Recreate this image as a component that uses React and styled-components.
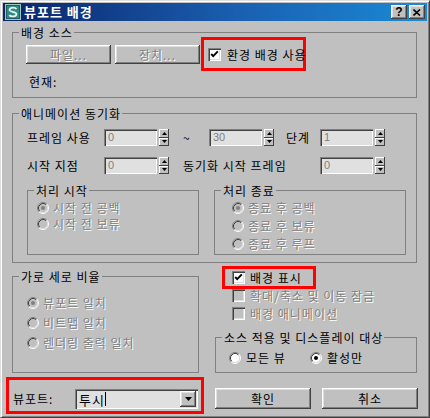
import React from "react";
import styled, { createGlobalStyle } from "styled-components";

const GlobalStyle = createGlobalStyle`
  html, body {
    margin: 0;
    padding: 0;
    background: #c0c0c0;
  }
  body {
    font-family: "Noto Sans CJK KR", "Noto Sans", sans-serif;
    font-size: 12px;
    letter-spacing: 1px;
    color: #000;
  }
`;

const raised = `
  box-shadow: inset -1px -1px #404040, inset 1px 1px #fff,
    inset -2px -2px #808080, inset 2px 2px #dfdfdf;
`;

const sunken = `
  box-shadow: inset 1px 1px #808080, inset 2px 2px #404040,
    inset -1px -1px #fff, inset -2px -2px #dfdfdf;
`;

const Window = styled.div`
  width: 430px;
  height: 418px;
  box-sizing: border-box;
  border: 1px solid;
  border-color: #dfdfdf #404040 #404040 #dfdfdf;
  box-shadow: inset 1px 1px #fff, inset -1px -1px #808080;
  padding: 2px;
  background: #c0c0c0;
  overflow: hidden;
  display: flex;
  flex-direction: column;
`;

const TitleBar = styled.div`
  height: 18px;
  flex: none;
  display: flex;
  align-items: center;
  padding: 0 2px 0 2px;
  background: linear-gradient(90deg, #0a246a 0%, #1a5fb0 55%, #1a8ad6 100%);
  color: #fff;
  font-weight: bold;
  font-size: 13px;
  line-height: 18px;
`;

const TitleText = styled.span`
  flex: 1;
  margin-left: 3px;
  white-space: nowrap;
`;

const CaptionButton = styled.div`
  width: 16px;
  height: 14px;
  box-sizing: border-box;
  background: #c0c0c0;
  ${raised};
  margin-left: ${(p) => p.$gap || 0}px;
  display: flex;
  align-items: center;
  justify-content: center;
  color: #000;
  font-family: "Liberation Sans", Arial, sans-serif;
  font-size: 12px;
  font-weight: bold;
  letter-spacing: 0;
  line-height: 14px;
`;

const Body = styled.div`
  padding-left: 9px;
  display: flex;
  flex-direction: column;
`;

const Group = styled.div`
  box-sizing: border-box;
  border: 1px solid #808080;
  width: ${(p) => p.$w}px;
  height: ${(p) => p.$h}px;
  margin-top: ${(p) => p.$mt || 0}px;
  padding: ${(p) => p.$pad || "0"};
  flex: none;
`;

const GroupTitle = styled.div`
  width: fit-content;
  height: 13px;
  line-height: 13px;
  margin: -7px 0 -6px 6px;
  padding: 0 1px 0 2px;
  background: #c0c0c0;
  white-space: nowrap;
`;

const Text = styled.span`
  white-space: nowrap;
  line-height: 13px;
  color: ${(p) => (p.$disabled ? "#808080" : "#000")};
  text-shadow: ${(p) => (p.$disabled ? "1px 1px 0 #fff" : "none")};
`;

const SourceRow = styled.div`
  display: flex;
  align-items: center;
  height: 34px;
  margin-top: 4px;
  padding-left: 13px;
`;

const PushButton = styled.div`
  width: ${(p) => p.$w}px;
  height: ${(p) => p.$h || 21}px;
  box-sizing: border-box;
  margin-left: ${(p) => p.$ml || 0}px;
  margin-top: ${(p) => p.$mt || 0}px;
  background: #c0c0c0;
  ${raised};
  display: flex;
  align-items: center;
  justify-content: center;
  flex: none;
`;

const Highlight = styled.div`
  box-sizing: border-box;
  border: 3px solid #ff0000;
  width: ${(p) => p.$w}px;
  height: ${(p) => p.$h}px;
  margin-left: ${(p) => p.$ml || 0}px;
  padding: ${(p) => p.$pad || "0"};
  display: flex;
  align-items: center;
  flex: none;
`;

const Current = styled.div`
  margin-top: 4px;
  padding-left: 16px;
  height: 13px;
  line-height: 13px;
`;

const SyncGrid = styled.div`
  display: grid;
  grid-template-columns: 77px 79px 26px 77px 34px 66px;
  grid-template-rows: 17px 17px;
  row-gap: 11px;
  align-items: center;
  margin-top: 15px;
  padding-left: 14px;
`;

const Wide = styled.div`
  grid-column: span 3;
`;

const SpinWrap = styled.div`
  display: flex;
  gap: 2px;
  height: 17px;
`;

const SpinInput = styled.div`
  width: 53px;
  height: 17px;
  box-sizing: border-box;
  background: #e0e0e0;
  ${sunken};
  padding: 2px 0 0 4px;
  color: #808080;
  font-family: "Liberation Sans", Arial, sans-serif;
  font-size: 11px;
  letter-spacing: 0;
  line-height: 13px;
`;

const Spinner = styled.div`
  width: 10px;
  height: 17px;
  display: flex;
  flex-direction: column;
`;

const SpinHalf = styled.div`
  flex: 1;
  background: #c0c0c0;
  box-shadow: inset -1px -1px #404040, inset 1px 1px #fff;
  display: flex;
  align-items: center;
  justify-content: center;
`;

const InnerRow = styled.div`
  display: flex;
  gap: 15px;
  margin-top: 16px;
  padding-left: 14px;
`;

const OptionList = styled.div`
  display: flex;
  flex-direction: ${(p) => (p.$row ? "row" : "column")};
  gap: ${(p) => p.$gap || 0}px;
  padding: ${(p) => p.$pad || "0"};
`;

const Option = styled.div`
  display: flex;
  align-items: center;
  gap: ${(p) => p.$gap || 4}px;
  height: 13px;
  width: ${(p) => (p.$w ? `${p.$w}px` : "auto")};
  flex: none;
`;

const CheckBox = styled.div`
  width: 13px;
  height: 13px;
  box-sizing: border-box;
  flex: none;
  background: ${(p) => (p.$disabled ? "#c0c0c0" : "#fff")};
  ${sunken};
  svg {
    display: block;
  }
`;

const Lower = styled.div`
  display: flex;
  align-items: flex-start;
`;

const RightColumn = styled.div`
  margin-left: 16px;
  margin-top: 3px;
  width: 202px;
  display: flex;
  flex-direction: column;
`;

const Footer = styled.div`
  display: flex;
  align-items: flex-start;
  margin-top: 4px;
`;

const FooterLabel = styled.div`
  width: 62px;
  flex: none;
  line-height: 13px;
  margin-top: -2px;
`;

const Combo = styled.div`
  width: 123px;
  height: 20px;
  box-sizing: border-box;
  background: #e0e0e0;
  ${sunken};
  display: flex;
  align-items: center;
  padding: 2px 2px 2px 4px;
  font-size: 13px;
`;

const ComboText = styled.span`
  flex: 1;
  display: flex;
  align-items: center;
  line-height: 15px;
`;

const Caret = styled.span`
  width: 1px;
  height: 14px;
  background: #000;
`;

const DropButton = styled.div`
  width: 16px;
  height: 16px;
  box-sizing: border-box;
  background: #c0c0c0;
  ${raised};
  display: flex;
  align-items: center;
  justify-content: center;
`;

const Radio = ({ selected, disabled }) => (
  <svg width="12" height="12" viewBox="0 0 12 12" style={{ flex: "none" }}>
    <circle cx="6" cy="6" r="4.5" fill={disabled ? "#c0c0c0" : "#fff"} />
    <path d="M2.11 9.89 A5.5 5.5 0 0 1 9.89 2.11" fill="none" stroke="#808080" />
    <path d="M2.82 9.18 A4.5 4.5 0 0 1 9.18 2.82" fill="none" stroke="#404040" />
    <path d="M9.89 2.11 A5.5 5.5 0 0 1 2.11 9.89" fill="none" stroke="#fff" />
    <path d="M9.18 2.82 A4.5 4.5 0 0 1 2.82 9.18" fill="none" stroke="#dfdfdf" />
    {selected && <circle cx="6" cy="6" r="2" fill={disabled ? "#808080" : "#000"} />}
  </svg>
);

const Check = ({ checked, disabled }) => (
  <CheckBox $disabled={disabled}>
    {checked && (
      <svg width="13" height="13" viewBox="0 0 13 13">
        <path d="M3.2 6 L5.2 8.2 L9.8 3.4" fill="none" stroke="#000" strokeWidth="1.9" />
      </svg>
    )}
  </CheckBox>
);

const Spin = ({ value }) => (
  <SpinWrap>
    <SpinInput>{value}</SpinInput>
    <Spinner>
      <SpinHalf>
        <svg width="5" height="3" viewBox="0 0 5 3">
          <path d="M0 3 L2.5 0 L5 3 Z" fill="#000" />
        </svg>
      </SpinHalf>
      <SpinHalf>
        <svg width="5" height="3" viewBox="0 0 5 3">
          <path d="M0 0 L2.5 3 L5 0 Z" fill="#000" />
        </svg>
      </SpinHalf>
    </Spinner>
  </SpinWrap>
);

const RadioOption = ({ label, selected, disabled, w, gap }) => (
  <Option $w={w} $gap={gap}>
    <Radio selected={selected} disabled={disabled} />
    <Text $disabled={disabled}>{label}</Text>
  </Option>
);

const CheckOption = ({ label, checked, disabled }) => (
  <Option $gap={5}>
    <Check checked={checked} disabled={disabled} />
    <Text $disabled={disabled}>{label}</Text>
  </Option>
);

const MaxIcon = () => (
  <svg width="16" height="16" viewBox="0 0 16 16" style={{ flex: "none" }}>
    <rect x="0.5" y="0.5" width="15" height="15" fill="#1f5f5c" stroke="#9fc7c2" />
    <rect x="2" y="2" width="12" height="12" fill="#2f8a83" />
    <path d="M11.5 5 C10 3 5 3 4.5 6 C4.2 8 11.5 7.5 11.5 10 C11.5 13 5.5 13 4.3 11"
      fill="none" stroke="#e8f4f2" strokeWidth="1.8" />
  </svg>
);

export default function App() {
  return (
    <>
      <GlobalStyle />
      <Window>
        <TitleBar>
          <MaxIcon />
          <TitleText>뷰포트 배경</TitleText>
          <CaptionButton>?</CaptionButton>
          <CaptionButton $gap={2}>
            <svg width="8" height="7" viewBox="0 0 8 7">
              <path d="M0.5 0.5 L7 6.5 M7 0.5 L0.5 6.5" stroke="#000" strokeWidth="1.6" />
            </svg>
          </CaptionButton>
        </TitleBar>

        <Body>
          <Group $w={405} $h={66} $mt={11}>
            <GroupTitle>배경 소스</GroupTitle>
            <SourceRow>
              <PushButton $w={85} $h={19}>
                <Text $disabled>파일...</Text>
              </PushButton>
              <PushButton $w={85} $h={19} $ml={4}>
                <Text $disabled>장치...</Text>
              </PushButton>
              <Highlight $w={105} $h={34} $ml={1} $pad="0 0 0 4px">
                <Option $gap={6}>
                  <Check checked />
                  <Text>환경 배경 사용</Text>
                </Option>
              </Highlight>
            </SourceRow>
            <Current>현재:</Current>
          </Group>

          <Group $w={405} $h={150} $mt={15}>
            <GroupTitle>애니메이션 동기화</GroupTitle>
            <SyncGrid>
              <Text>프레임 사용</Text>
              <Spin value="0" />
              <Text>~</Text>
              <Spin value="30" />
              <Text>단계</Text>
              <Spin value="1" />
              <Text>시작 지점</Text>
              <Spin value="0" />
              <Wide>
                <Text>동기화 시작 프레임</Text>
              </Wide>
              <Spin value="0" />
            </SyncGrid>
            <InnerRow>
              <Group $w={172} $h={65}>
                <GroupTitle>처리 시작</GroupTitle>
                <OptionList $gap={3} $pad="10px 0 0 9px">
                  <RadioOption label="시작 전 공백" selected disabled />
                  <RadioOption label="시작 전 보류" disabled />
                </OptionList>
              </Group>
              <Group $w={192} $h={65}>
                <GroupTitle>처리 종료</GroupTitle>
                <OptionList $gap={5} $pad="10px 0 0 17px">
                  <RadioOption label="종료 후 공백" selected disabled />
                  <RadioOption label="종료 후 보류" disabled />
                  <RadioOption label="종료 후 루프" disabled />
                </OptionList>
              </Group>
            </InnerRow>
          </Group>

          <Lower>
            <Group $w={187} $h={97} $mt={13}>
              <GroupTitle>가로 세로 비율</GroupTitle>
              <OptionList $gap={7} $pad="19px 0 0 14px">
                <RadioOption label="뷰포트 일치" selected disabled />
                <RadioOption label="비트맵 일치" disabled />
                <RadioOption label="렌더링 출력 일치" disabled />
              </OptionList>
            </Group>

            <RightColumn>
              <Highlight $w={94} $h={23} $ml={7} $pad="0 0 0 7px">
                <CheckOption label="배경 표시" checked />
              </Highlight>
              <OptionList $gap={5} $pad="0 0 0 17px">
                <CheckOption label="확대/축소 및 이동 잠금" disabled />
                <CheckOption label="배경 애니메이션" disabled />
              </OptionList>
              <Group $w={202} $h={36} $mt={17}>
                <GroupTitle>소스 적용 및 디스플레이 대상</GroupTitle>
                <OptionList $row $pad="13px 0 0 13px">
                  <RadioOption label="모든 뷰" w={81} gap={5} />
                  <RadioOption label="활성만" selected gap={5} />
                </OptionList>
              </Group>
            </RightColumn>
          </Lower>

          <Footer>
            <Highlight $w={198} $h={37} $ml={-6} $pad="7px 0 0 4px">
              <FooterLabel>뷰포트:</FooterLabel>
              <Combo>
                <ComboText>
                  투시
                  <Caret />
                </ComboText>
                <DropButton>
                  <svg width="7" height="4" viewBox="0 0 7 4">
                    <path d="M0 0 L3.5 4 L7 0 Z" fill="#000" />
                  </svg>
                </DropButton>
              </Combo>
            </Highlight>
            <PushButton $w={96} $ml={11} $mt={11}>
              확인
            </PushButton>
            <PushButton $w={96} $ml={11} $mt={11}>
              취소
            </PushButton>
          </Footer>
        </Body>
      </Window>
    </>
  );
}
